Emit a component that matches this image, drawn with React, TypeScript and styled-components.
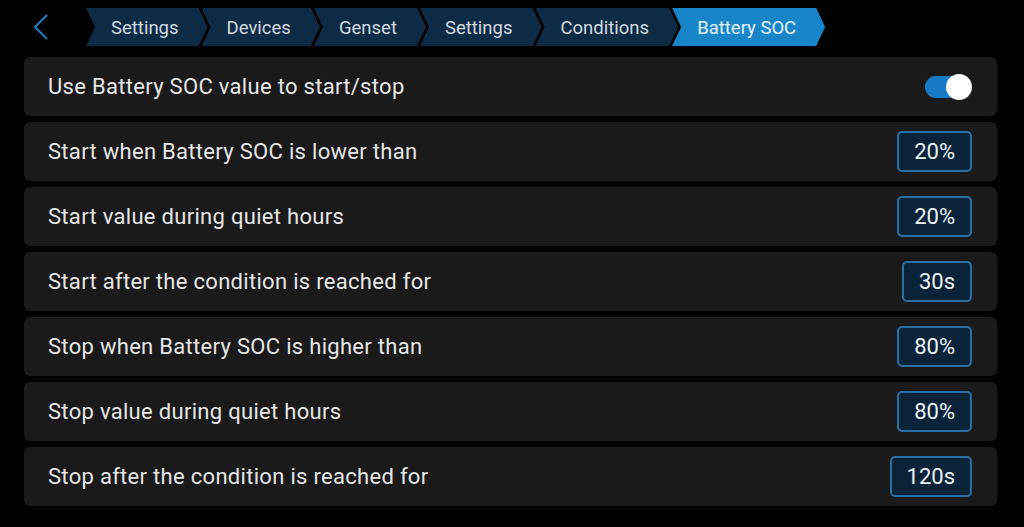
import styled, { createGlobalStyle } from "styled-components";

const GlobalStyle = createGlobalStyle`
    html, body {
        margin: 0;
        padding: 0;
        background: #000;
    }
    body {
        font-family: Roboto, "Noto Sans", "Liberation Sans", sans-serif;
        color: #e8e8e8;
    }
`;

const Page = styled.div`
    width: 1024px;
    height: 527px;
    background: #000;
    display: flex;
    flex-direction: column;
    overflow: hidden;
`;

const Header = styled.div`
    display: flex;
    align-items: center;
    height: 38px;
    padding: 8px 0 0 0;
`;

const BackButton = styled.div`
    width: 86px;
    height: 38px;
    display: flex;
    align-items: center;
    padding-left: 33px;
    box-sizing: border-box;
`;

const Crumbs = styled.div`
    display: flex;
    height: 38px;
`;

const Crumb = styled.div<{ active?: boolean }>`
    height: 38px;
    box-sizing: border-box;
    display: flex;
    align-items: center;
    padding: 2px 29px 0 25px;
    margin-right: -6px;
    font-size: 18.5px;
    color: ${(p) => (p.active ? "#e4f3ff" : "#d2d9e0")};
    background: ${(p) => (p.active ? "#1985c9" : "#0e2b45")};
    clip-path: polygon(0 0, calc(100% - 9px) 0, 100% 50%, calc(100% - 9px) 100%, 0 100%, 9px 50%);
`;

const List = styled.div`
    display: flex;
    flex-direction: column;
    gap: 6px;
    padding: 11px 27px 0 24px;
`;

const Row = styled.div`
    height: 59px;
    display: flex;
    align-items: center;
    justify-content: space-between;
    padding: 0 25px 0 24px;
    background: #1a1a1a;
    border-radius: 6px;
`;

const Label = styled.span`
    font-size: 22px;
    letter-spacing: 0.3px;
    color: #e6e6e6;
`;

const ValueBox = styled.div`
    height: 41px;
    box-sizing: border-box;
    display: flex;
    align-items: center;
    padding: 0 15px;
    border: 2px solid #2b6fa2;
    border-radius: 5px;
    background: #0a2339;
    font-size: 22px;
    color: #eef2f5;
`;

const Switch = styled.div`
    position: relative;
    width: 47px;
    height: 26px;
    display: flex;
    align-items: center;
`;

const Track = styled.div`
    width: 40px;
    height: 22px;
    border-radius: 11px;
    background: #167bc6;
`;

const Knob = styled.div`
    position: absolute;
    right: 0;
    top: 0;
    width: 26px;
    height: 26px;
    border-radius: 50%;
    background: #fff;
`;

const crumbs = ["Settings", "Devices", "Genset", "Settings", "Conditions", "Battery SOC"];

const rows = [
    { label: "Start when Battery SOC is lower than", value: "20%" },
    { label: "Start value during quiet hours", value: "20%" },
    { label: "Start after the condition is reached for", value: "30s" },
    { label: "Stop when Battery SOC is higher than", value: "80%" },
    { label: "Stop value during quiet hours", value: "80%" },
    { label: "Stop after the condition is reached for", value: "120s" },
];

function App() {
    return (
        <>
            <GlobalStyle />
            <Page>
                <Header>
                    <BackButton>
                        <svg width="16" height="26" viewBox="0 0 16 26">
                            <path d="M14 1 L2 13 L14 25" fill="none" stroke="#1f7fc2" strokeWidth="2" />
                        </svg>
                    </BackButton>
                    <Crumbs>
                        {crumbs.map((c, i) => (
                            <Crumb key={i} active={i === crumbs.length - 1}>
                                {c}
                            </Crumb>
                        ))}
                    </Crumbs>
                </Header>
                <List>
                    <Row>
                        <Label>Use Battery SOC value to start/stop</Label>
                        <Switch>
                            <Track />
                            <Knob />
                        </Switch>
                    </Row>
                    {rows.map((r) => (
                        <Row key={r.label}>
                            <Label>{r.label}</Label>
                            <ValueBox>{r.value}</ValueBox>
                        </Row>
                    ))}
                </List>
            </Page>
        </>
    );
}

export default App;
